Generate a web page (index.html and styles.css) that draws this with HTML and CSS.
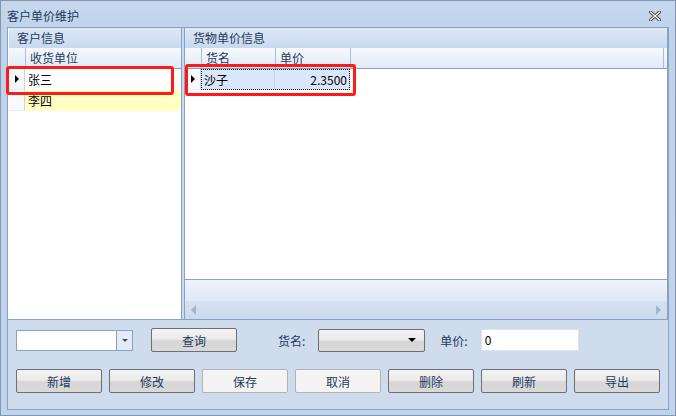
FILE: index.html
```html
<!DOCTYPE html>
<html>
<head>
  <title>客户单价维护</title>
  <link rel="stylesheet" href="styles.css">
</head>
<body>
  <div class="window">
    <div class="titlebar">
      <span class="title">客户单价维护</span>
      <svg class="close" width="12" height="10" viewBox="0 0 12 10">
        <path d="M1.5 1 L10.5 9 M10.5 1 L1.5 9" stroke="#4a4a4a" stroke-width="3.2" stroke-linecap="square"/>
        <path d="M1.5 1 L10.5 9 M10.5 1 L1.5 9" stroke="#ffffff" stroke-width="1.2" stroke-linecap="square"/>
      </svg>
    </div>

    <div class="frame">
      <div class="panes">
        <!-- customers -->
        <div class="pane pane-left">
          <div class="pane-header">客户信息</div>
          <div class="grid">
            <div class="grid-head">
              <div class="ind"></div>
              <div class="col col-unit">收货单位</div>
            </div>
            <div class="grid-row">
              <div class="ind"><span class="arrow"></span></div>
              <div class="cell col-unit">张三</div>
            </div>
            <div class="grid-row alt">
              <div class="ind"></div>
              <div class="cell col-unit">李四</div>
            </div>
          </div>
        </div>

        <div class="splitter"></div>

        <!-- goods prices -->
        <div class="pane pane-right">
          <div class="pane-header">货物单价信息</div>
          <div class="grid">
            <div class="grid-head">
              <div class="ind"></div>
              <div class="col col-name">货名</div>
              <div class="col col-price">单价</div>
              <div class="col col-rest"></div>
            </div>
            <div class="grid-row selected">
              <div class="ind"><span class="arrow"></span></div>
              <div class="focus">
                <div class="cell col-name">沙子</div>
                <div class="cell col-price num">2.3500</div>
              </div>
            </div>
          </div>
          <div class="grid-footer"></div>
          <div class="hscroll">
            <span class="sarrow left"></span>
            <span class="sarrow right"></span>
          </div>
        </div>
      </div>

      <div class="toolbar">
        <div class="tool-row">
          <div class="combo">
            <div class="combo-text"></div>
            <div class="combo-btn"><span class="tri small"></span></div>
          </div>
          <button class="btn btn-query">查询</button>
          <span class="label label-name">货名:</span>
          <div class="select"><span class="tri"></span></div>
          <span class="label label-price">单价:</span>
          <div class="textbox">0</div>
        </div>
        <div class="tool-row buttons">
          <button class="btn">新增</button>
          <button class="btn">修改</button>
          <button class="btn disabled">保存</button>
          <button class="btn disabled">取消</button>
          <button class="btn">删除</button>
          <button class="btn">刷新</button>
          <button class="btn">导出</button>
        </div>
      </div>
    </div>

    <div class="mark mark-left"></div>
    <div class="mark mark-right"></div>
  </div>
</body>
</html>
```

FILE: styles.css
```css
body {
  margin: 0;
  font-family: "Noto Sans CJK SC", "DejaVu Sans", sans-serif;
  font-size: 12px;
  background-color: #c4d6ec;
}

.window {
  position: relative;
  width: 676px;
  height: 416px;
  box-sizing: border-box;
  border: 1px solid #8496b0;
  background: linear-gradient(#c7d8ee, #bfd2ea 30px, #c2d4eb);
}

.titlebar {
  height: 26px;
  display: flex;
  align-items: center;
  justify-content: space-between;
  padding: 0 14px 0 6px;
}

.title {
  color: #1e395b;
  line-height: 1;
  margin-top: 4px;
}

.close {
  margin-top: 4px;
}

.frame {
  margin: 0 6px;
  border: 1px solid #8aa2c2;
  background-color: #cfdcee;
}

.panes {
  display: flex;
  height: 291px;
  border-bottom: 1px solid #8aa2c2;
}

.pane {
  display: flex;
  flex-direction: column;
  background-color: #ffffff;
}

.pane-left {
  width: 172px;
  border-left: 1px solid #ffffff;
  border-right: 1px solid #8aa2c2;
}

.splitter {
  width: 2px;
  background-color: #cad9ee;
  border-right: 1px solid #8aa2c2;
}

.pane-right {
  flex: 1;
  border-right: 1px solid #8aa2c2;
}

.pane-header {
  height: 20px;
  line-height: 20px;
  padding-left: 8px;
  color: #1e395b;
  background: linear-gradient(#dde8f6, #c8d9ef);
}

.grid {
  flex: 1;
}

.grid-head {
  display: flex;
  height: 20px;
  border-bottom: 1px solid #8aa2c2;
  background: linear-gradient(#f6f9fd, #e1eaf6);
}

.grid-head .col {
  line-height: 20px;
  padding-left: 4px;
  color: #1e395b;
  border-left: 1px solid #a9bdd7;
  box-sizing: border-box;
}

.ind {
  width: 16px;
  flex: none;
  display: flex;
  align-items: center;
  justify-content: center;
  box-sizing: border-box;
}

.grid-row {
  display: flex;
  height: 21px;
}

.grid-row .ind {
  border-right: 1px solid #c8d6e8;
  border-bottom: 1px solid #e6ecf4;
  background-color: #f7f9fc;
}

.cell {
  line-height: 21px;
  padding-left: 3px;
  color: #000000;
  box-sizing: border-box;
}

.arrow {
  width: 0;
  height: 0;
  border-top: 4px solid transparent;
  border-bottom: 4px solid transparent;
  border-left: 4px solid #000000;
}

.col-unit {
  width: 156px;
}

.alt .cell {
  background-color: #ffffc4;
}

.col-name {
  width: 74px;
}

.col-price {
  width: 75px;
}

.col-rest {
  width: 314px;
  border-right: 1px solid #a9bdd7;
}

.selected .focus {
  display: flex;
  background-color: #d8e7f9;
  outline: 1px dotted #000000;
  outline-offset: -1px;
}

.selected .col-name {
  border-right: 1px solid #c4d4ea;
}

.num {
  text-align: right;
  padding-right: 3px;
}

.grid-footer {
  height: 21px;
  border-top: 1px solid #8aa2c2;
  background: linear-gradient(#eef3fb, #dfe8f5);
}

.hscroll {
  height: 18px;
  display: flex;
  align-items: center;
  justify-content: space-between;
  padding: 0 6px;
  background: linear-gradient(#d5e1f1, #ccdaed);
}

.sarrow {
  width: 0;
  height: 0;
  border-top: 5px solid transparent;
  border-bottom: 5px solid transparent;
}

.sarrow.left {
  border-right: 5px solid #a3b5cd;
}

.sarrow.right {
  border-left: 5px solid #a3b5cd;
}

.toolbar {
  height: 89px;
  padding: 8px 0 0 8px;
  box-sizing: border-box;
}

.tool-row {
  display: flex;
  align-items: center;
  height: 24px;
}

.buttons {
  margin-top: 17px;
  gap: 7px;
}

.combo {
  display: flex;
  width: 117px;
  height: 21px;
  box-sizing: border-box;
  border: 1px solid #8aa2c2;
  background-color: #ffffff;
}

.combo-text {
  flex: 1;
}

.combo-btn {
  width: 15px;
  border-left: 1px solid #8aa2c2;
  background-color: #e2ebf7;
  display: flex;
  align-items: center;
  justify-content: center;
}

.tri {
  width: 0;
  height: 0;
  border-left: 4px solid transparent;
  border-right: 4px solid transparent;
  border-top: 4px solid #000000;
}

.tri.small {
  border-left-width: 3px;
  border-right-width: 3px;
  border-top: 3px solid #444c58;
}

.btn {
  width: 86px;
  height: 24px;
  padding: 0;
  font-family: inherit;
  font-size: 12px;
  color: #1e395b;
  border: 1px solid #6f6f6f;
  border-radius: 2px;
  background: linear-gradient(#f3f3f3, #ebebeb 45%, #d6d6d6 55%, #d9d9d9);
}

.btn.disabled {
  border-color: #b3b3b3;
  background: #f4f4f4;
}

.btn-query {
  margin-left: 18px;
}

.label {
  color: #1e395b;
}

.label-name {
  margin-left: 41px;
}

.select {
  width: 107px;
  height: 23px;
  margin-left: 13px;
  box-sizing: border-box;
  border: 1px solid #6f6f6f;
  border-radius: 2px;
  background: linear-gradient(#f3f3f3, #ebebeb 45%, #d6d6d6 55%, #d9d9d9);
  display: flex;
  align-items: center;
  justify-content: flex-end;
  padding-right: 8px;
}

.label-price {
  margin-left: 15px;
}

.textbox {
  width: 98px;
  height: 22px;
  line-height: 20px;
  margin-left: 13px;
  padding-left: 3px;
  box-sizing: border-box;
  border: 1px solid #dbe3ee;
  background-color: #ffffff;
  color: #000000;
}

.mark {
  position: absolute;
  border: 3px solid #ff1a1a;
  border-radius: 3px;
  box-sizing: border-box;
}

.mark-left {
  left: 5px;
  top: 65px;
  width: 168px;
  height: 29px;
}

.mark-right {
  left: 184px;
  top: 63px;
  width: 171px;
  height: 32px;
}
```
